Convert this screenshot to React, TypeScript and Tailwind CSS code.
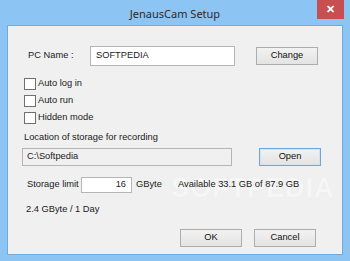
import React from 'react';

const font = { fontFamily: '"Liberation Sans", Arial, sans-serif' };

function Btn({ label, def }: { label: string; def?: boolean }) {
  return (
    <button
      className={`w-[62px] h-[18px] flex items-center justify-center text-[9.3px] text-[#111] bg-gradient-to-b from-[#f2f2f2] to-[#e3e3e3] border ${
        def ? 'border-[#6aa6e0] shadow-[inset_0_0_0_1px_#cfe4f7]' : 'border-[#adadad]'
      }`}
    >
      {label}
    </button>
  );
}

function Check({ label }: { label: string }) {
  return (
    <div className="h-[17px] flex items-center gap-[2px]">
      <span className="w-[12px] h-[12px] border border-[#707070] bg-white" />
      <span>{label}</span>
    </div>
  );
}

export default function App() {
  return (
    <div className="w-[350px] h-[261px] bg-[#8cc4f4] flex flex-col overflow-hidden" style={font}>
      <div className="relative h-[25px] flex items-center justify-center">
        <span className="text-[11px] text-[#2b2b2b] mt-[3px]" style={{ fontFamily: '"Noto Sans", sans-serif' }}>
          JenausCam Setup
        </span>
        <div className="absolute right-[6px] top-0 w-[27px] h-[19px] bg-[#c74f4f] flex items-center justify-center text-white text-[11px] font-bold leading-none">
          ✕
        </div>
      </div>
      <div className="relative mx-[7px] h-[230px] border border-[#6fa9df] bg-[#f0f0f0] flex flex-col text-[9.3px] text-[#1a1a1a]">
        {/* faint watermark behind the form */}
        <span
          className="absolute z-0 left-[163px] top-[142px] text-[27px] font-bold tracking-[1px] text-[#f6f6f6] pointer-events-none select-none"
          style={{ textShadow: '0 0 1px #e6e6e6' }}
        >
          SOFTPEDIA
        </span>
        <div className="mt-[20px] h-[20px] flex items-center">
          <span className="ml-[20px] w-[62px]">PC Name :</span>
          <div className="w-[145px] h-[20px] bg-white border border-[#b5b5b5] flex items-center pl-[5px]">
            SOFTPEDIA
          </div>
          <div className="ml-[21px]">
            <Btn label="Change" />
          </div>
        </div>
        <div className="mt-[9px] ml-[16px] flex flex-col">
          <Check label="Auto log in" />
          <Check label="Auto run" />
          <Check label="Hidden mode" />
        </div>
        <div className="mt-[5px] ml-[16px] h-[14px] flex items-center">Location of storage for recording</div>
        <div className="mt-[3px] h-[18px] flex items-center">
          <div className="ml-[14px] w-[210px] h-[18px] border border-[#b5b5b5] flex items-center pl-[4px]">C:\Softpedia</div>
          <div className="ml-[27px]">
            <Btn label="Open" def />
          </div>
        </div>
        <div className="relative z-10 mt-[11px] h-[16px] flex items-center">
          <span className="ml-[19px] w-[54px]">Storage limit</span>
          <div className="w-[51px] h-[16px] bg-white border border-[#b5b5b5] flex items-center justify-end pr-[5px]">16</div>
          <span className="ml-[4px] w-[42px]">GByte</span>
          <span>Available 33.1 GB of 87.9 GB</span>
        </div>
        <div className="mt-[10px] ml-[18px] h-[14px] flex items-center">2.4 GByte / 1 Day</div>
        <div className="mt-[12px] ml-[172px] flex gap-[12px]">
          <Btn label="OK" />
          <Btn label="Cancel" />
        </div>
      </div>
    </div>
  );
}
